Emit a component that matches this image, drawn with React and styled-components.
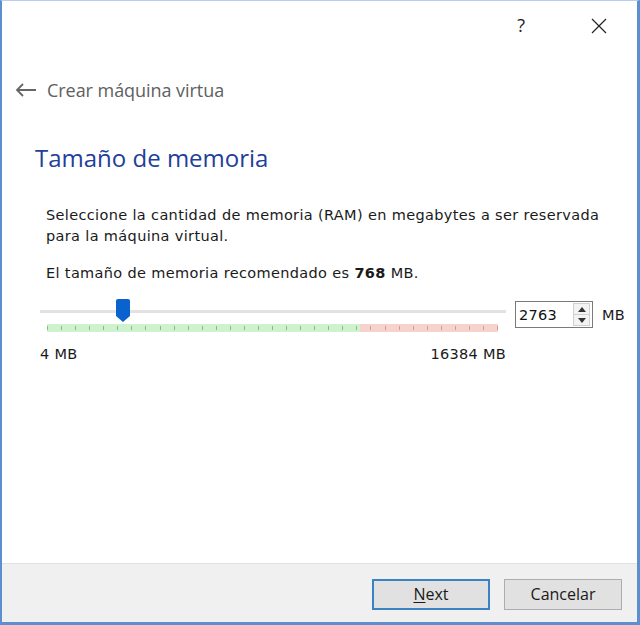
import React from "react";
import styled, { createGlobalStyle } from "styled-components";

const Global = createGlobalStyle`
  html, body { margin: 0; padding: 0; background: #fff; }
  #root { width: 640px; height: 625px; }
  * { box-sizing: border-box; }
`;

const TICKS = 33;
const MAX = 16384;
const VALUE = 2763;
const RED_FROM = 0.695;

const Window = styled.div`
  width: 640px;
  height: 625px;
  display: flex;
  flex-direction: column;
  background: #fff;
  border-left: 2px solid #5b8fd0;
  border-right: 3px solid #5b8fd0;
  border-bottom: 3px solid #5b8fd0;
  border-top: 1px solid #b7cfee;
  font-family: "DejaVu Sans", sans-serif;
`;

const TitleBar = styled.div`
  height: 50px;
  display: flex;
  align-items: center;
  justify-content: flex-end;
  padding-right: 30px;
  gap: 66px;
`;

const Help = styled.span`
  font-family: "Open Sans", sans-serif;
  font-size: 18px;
  color: #222;
  margin-top: -2px;
`;

const NavRow = styled.div`
  display: flex;
  align-items: center;
  height: 30px;
  margin-top: 24px;
  padding-left: 13px;
  gap: 10px;
`;

const NavTitle = styled.span`
  font-family: "Open Sans", sans-serif;
  font-size: 18px;
  letter-spacing: -0.05px;
  color: #606060;
`;

const Content = styled.div`
  flex: 1;
  padding: 0 0 0 33px;
`;

const Heading = styled.h1`
  margin: 38px 0 0;
  font-family: "Open Sans", sans-serif;
  font-weight: 400;
  font-size: 24px;
  color: #22409a;
  line-height: 30px;
`;

const Text = styled.p`
  margin: ${(p) => p.$mt || 0}px 0 0 11px;
  font-size: 14.5px;
  letter-spacing: 0.35px;
  line-height: 21px;
  color: #1a1a1a;
  white-space: nowrap;
  b { font-weight: 700; }
`;

const SliderRow = styled.div`
  display: flex;
  align-items: flex-start;
  margin-top: 15px;
  margin-left: 5px;
`;

const SliderCol = styled.div`
  width: 466px;
`;

const TrackArea = styled.div`
  position: relative;
  height: 34px;
`;

const Track = styled.div`
  position: absolute;
  left: 0;
  right: 0;
  top: 11px;
  height: 3px;
  background: #e2e2e2;
`;

const Thumb = styled.svg`
  position: absolute;
  top: 0;
`;

const TickBand = styled.div`
  position: absolute;
  left: 7px;
  right: 8px;
  top: 25px;
  height: 8px;
  display: flex;
  justify-content: space-between;
  align-items: center;
  background: linear-gradient(
    to right,
    #cdf2cd 0,
    #cdf2cd ${RED_FROM * 100}%,
    #f7d3ce ${RED_FROM * 100}%,
    #f7d3ce 100%
  );
`;

const Tick = styled.i`
  width: 1px;
  height: 4px;
  background: ${(p) => (p.$red ? "#d59a94" : "#88bb88")};
`;

const Scale = styled.div`
  display: flex;
  justify-content: space-between;
  margin-top: 13px;
  font-size: 14.5px;
  letter-spacing: 0.3px;
  color: #1a1a1a;
`;

const SpinWrap = styled.div`
  display: flex;
  align-items: center;
  margin-left: 9px;
  margin-top: 2px;
  gap: 9px;
`;

const Spin = styled.div`
  width: 78px;
  height: 27px;
  border: 1px solid #7a7a7a;
  display: flex;
  align-items: center;
  justify-content: space-between;
  padding: 0 2px 0 3px;
  font-size: 14.5px;
  letter-spacing: 0.3px;
  color: #111;
`;

const SpinButtons = styled.div`
  display: flex;
  flex-direction: column;
  width: 17px;
  height: 23px;
  border: 1px solid #d0d0d0;
  background: #f3f3f3;
`;

const SpinBtn = styled.div`
  flex: 1;
  display: flex;
  align-items: center;
  justify-content: center;
  & + & { border-top: 1px solid #d0d0d0; }
`;

const Unit = styled.span`
  font-size: 14.5px;
  letter-spacing: 0.3px;
  color: #1a1a1a;
`;

const Footer = styled.div`
  height: 59px;
  background: #f0f0f0;
  border-top: 1px solid #e2e2e2;
  display: flex;
  justify-content: flex-end;
  align-items: center;
  gap: 14px;
  padding: 2px 15px 0 0;
`;

const Button = styled.button`
  width: 118px;
  height: 31px;
  font-family: "Open Sans", sans-serif;
  font-size: 16px;
  color: #1a1a1a;
  background: #e1e1e1;
  border: ${(p) => (p.$primary ? "2px solid #3a82c4" : "1px solid #adadad")};
  padding: 0;
  u { text-decoration-thickness: 1px; text-underline-offset: 2px; }
`;

export default function App() {
  const pos = VALUE / MAX;
  return (
    <>
      <Global />
      <Window>
        <TitleBar>
          <Help>?</Help>
          <svg width="16" height="16" viewBox="0 0 16 16">
            <path d="M1 1 L15 15 M15 1 L1 15" stroke="#222" strokeWidth="1.2" />
          </svg>
        </TitleBar>
        <NavRow>
          <svg width="22" height="14" viewBox="0 0 22 14">
            <path d="M21 7 H2 M8 1 L2 7 L8 13" stroke="#666" strokeWidth="1.8" fill="none" />
          </svg>
          <NavTitle>Crear máquina virtua</NavTitle>
        </NavRow>
        <Content>
          <Heading>Tamaño de memoria</Heading>
          <Text $mt={32}>
            Seleccione la cantidad de memoria (RAM) en megabytes a ser reservada
            <br />
            para la máquina virtual.
          </Text>
          <Text $mt={16}>
            El tamaño de memoria recomendado es <b>768</b> MB.
          </Text>
          <SliderRow>
            <SliderCol>
              <TrackArea>
                <Track />
                <TickBand>
                  {Array.from({ length: TICKS }, (_, i) => (
                    <Tick key={i} $red={i / (TICKS - 1) > RED_FROM} />
                  ))}
                </TickBand>
                <Thumb
                  width="14"
                  height="23"
                  viewBox="0 0 14 23"
                  style={{ left: 7 + pos * 451 - 7 }}
                >
                  <path d="M2 0 H12 Q14 0 14 2 V17 L7 23 L0 17 V2 Q0 0 2 0 Z" fill="#0a62cf" />
                </Thumb>
              </TrackArea>
              <Scale>
                <span>4 MB</span>
                <span>16384 MB</span>
              </Scale>
            </SliderCol>
            <SpinWrap>
              <Spin>
                <span>2763</span>
                <SpinButtons>
                  <SpinBtn>
                    <svg width="8" height="5" viewBox="0 0 8 5">
                      <path d="M0 5 L4 0 L8 5 Z" fill="#333" />
                    </svg>
                  </SpinBtn>
                  <SpinBtn>
                    <svg width="8" height="5" viewBox="0 0 8 5">
                      <path d="M0 0 L4 5 L8 0 Z" fill="#333" />
                    </svg>
                  </SpinBtn>
                </SpinButtons>
              </Spin>
              <Unit>MB</Unit>
            </SpinWrap>
          </SliderRow>
        </Content>
        <Footer>
          <Button $primary>
            <u>N</u>ext
          </Button>
          <Button>Cancelar</Button>
        </Footer>
      </Window>
    </>
  );
}
